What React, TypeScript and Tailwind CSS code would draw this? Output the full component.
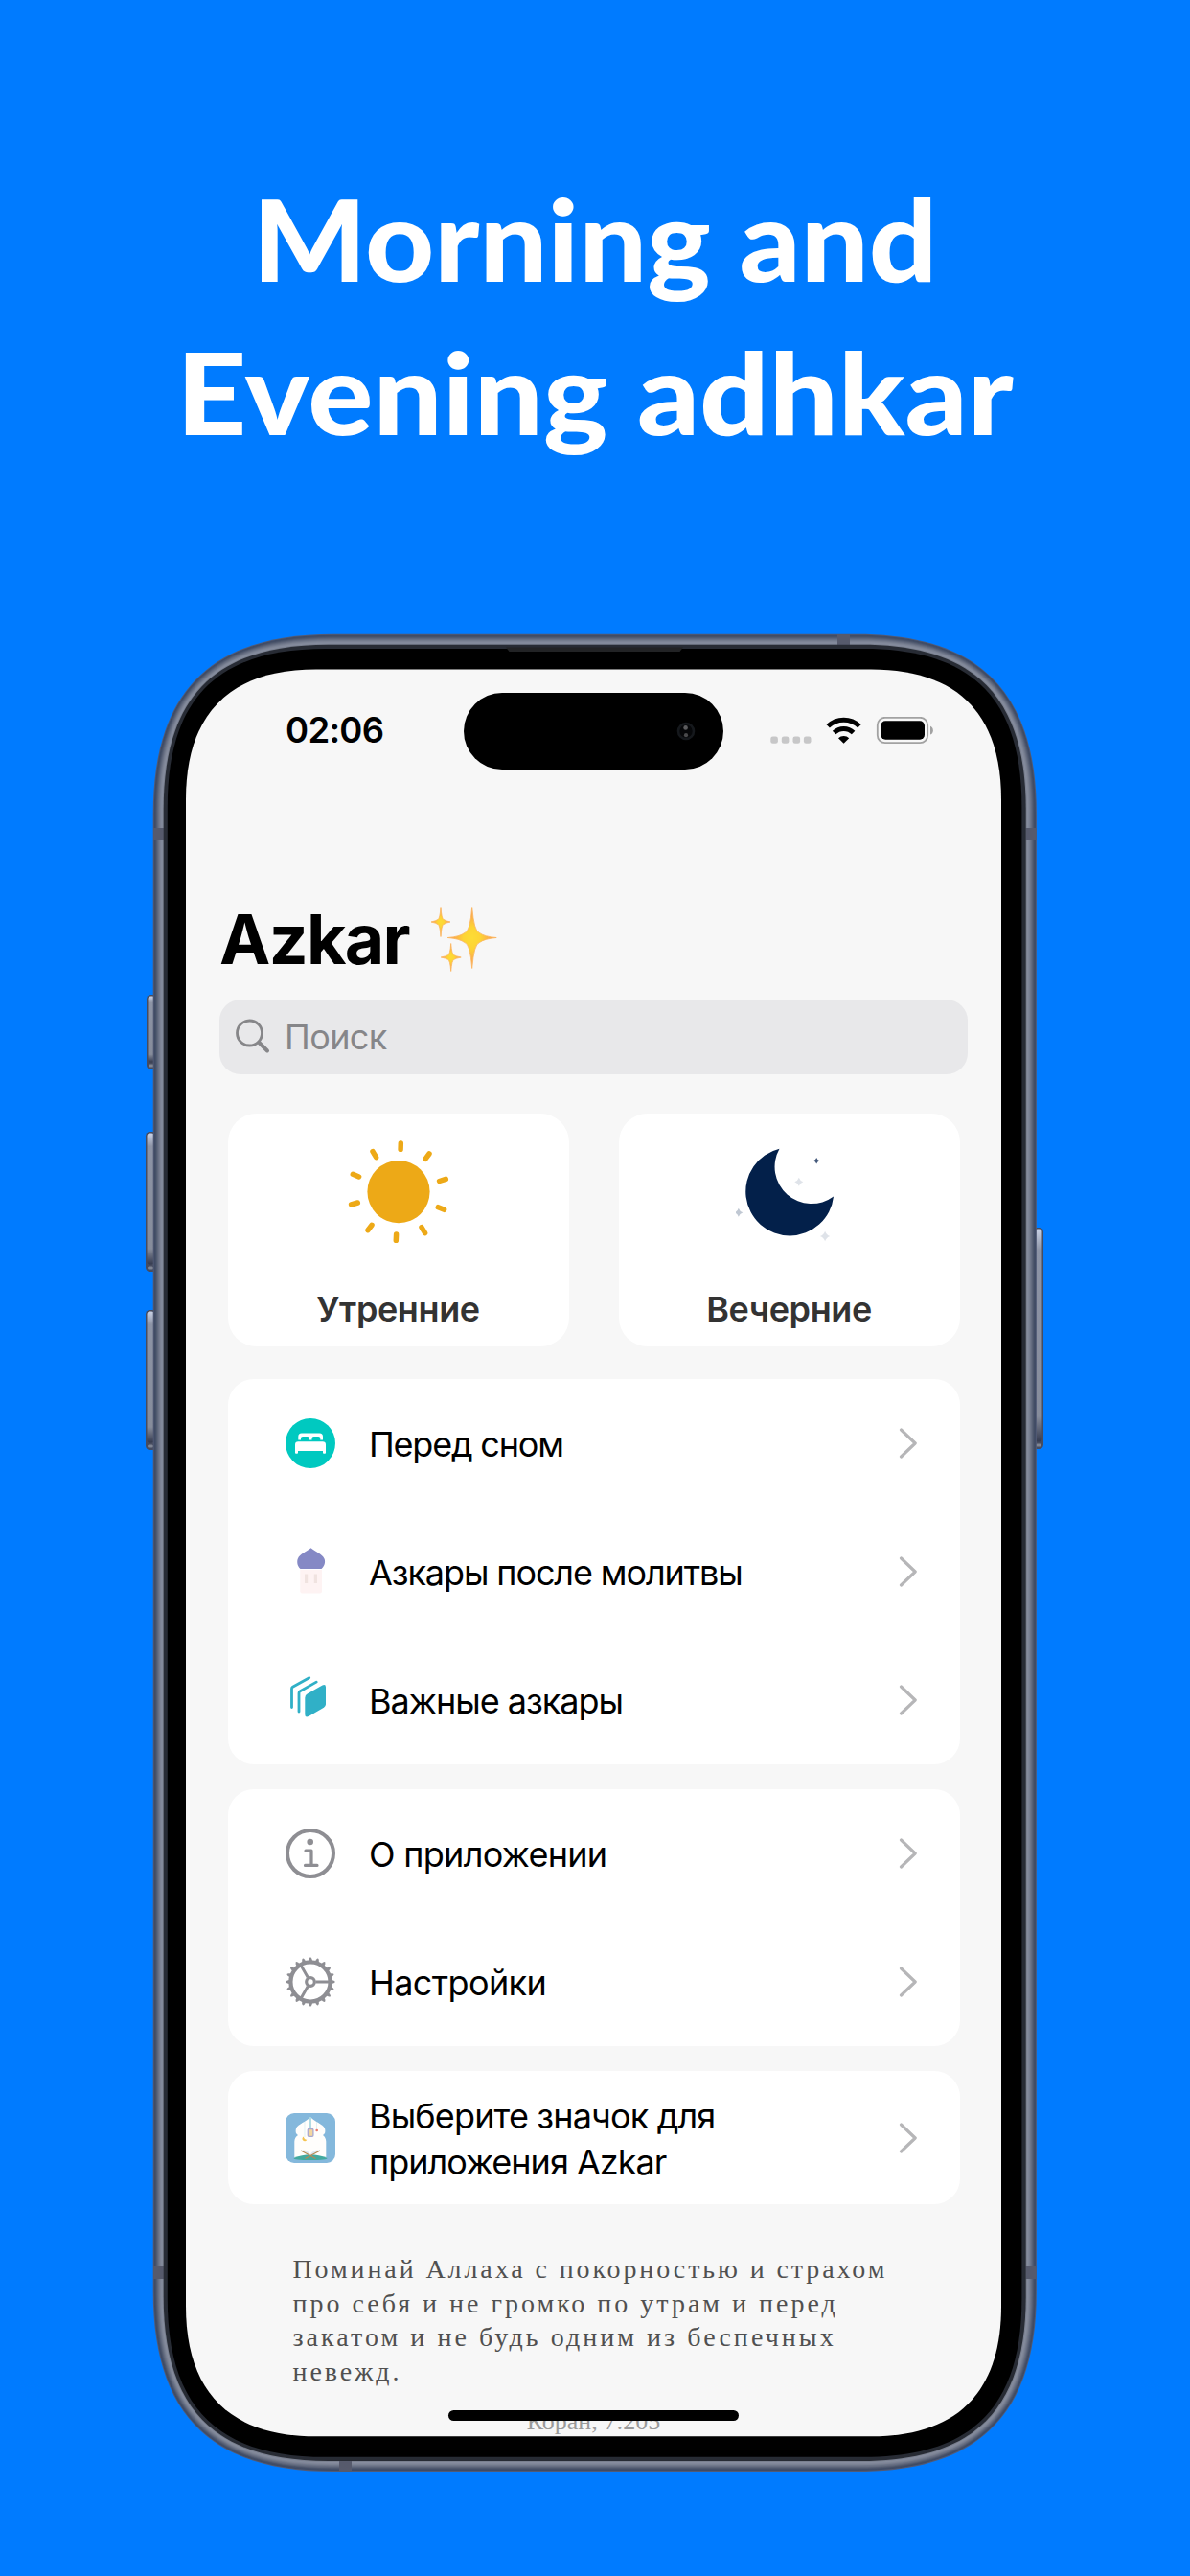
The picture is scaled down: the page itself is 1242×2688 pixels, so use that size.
import type { ReactNode } from "react";

/* Smooth-cornered rectangle: l is where the curve starts, a is the handle distance from the corner. */
function squircle(x0: number, y0: number, x1: number, y1: number, l: number, a: number) {
  return `M${x0} ${y0 + l}C${x0} ${y0 + a} ${x0 + a} ${y0} ${x0 + l} ${y0}H${x1 - l}C${x1 - a} ${y0} ${x1} ${y0 + a} ${x1} ${y0 + l}V${y1 - l}C${x1} ${y1 - a} ${x1 - a} ${y1} ${x1 - l} ${y1}H${x0 + l}C${x0 + a} ${y1} ${x0} ${y1 - a} ${x0} ${y1 - l}Z`;
}

const bandColors = ["#515a75", "#3f4b64", "#444f67", "#4e586e", "#5a6378", "#666e82", "#70788b", "#7b8293", "#81889a", "#868d9e", "#7a8090"];

function SideButton({ x, y, h, flip }: { x: number; y: number; h: number; flip?: boolean }) {
  return (
    <g>
      <rect x={x} y={y} width={14} height={h} rx={4.5} fill="#474c5f" />
      <rect x={flip ? x + 5 : x + 1.5} y={y + 1.5} width={7.5} height={h - 9} rx={3} fill="url(#button)" />
      <rect x={flip ? x + 6 : x + 2} y={y + h - 5.5} width={6} height={3} rx={1.5} fill="#7f8593" />
    </g>
  );
}

function PhoneFrame() {
  return (
    <svg className="absolute inset-0" width="942" height="1927" viewBox="150 657 942 1927">
      <defs>
        <linearGradient id="button" x1="0" y1="0" x2="0" y2="1">
          <stop offset="0" stopColor="#c9d2e6" />
          <stop offset="0.1" stopColor="#8d94a6" />
          <stop offset="0.88" stopColor="#868c9b" />
          <stop offset="1" stopColor="#343a4f" />
        </linearGradient>
      </defs>
      <SideButton x={153} y={1038} h={78} />
      <SideButton x={152} y={1181} h={146} />
      <SideButton x={152} y={1367} h={146} />
      <SideButton x={1075} y={1281} h={231} flip />
      {bandColors.map((c, i) => (
        <path key={c} d={squircle(159.7 + i, 661.7 + i, 1081.9 - i, 2579 - i, 188 - i * 1.5, 60 - i * 0.55)} fill={c} />
      ))}
      <g fill="#565a6c">
        <rect x="160" y="864" width="11" height="13" />
        <rect x="160" y="2365" width="11" height="13" />
        <rect x="1070.5" y="864" width="11" height="13" />
        <rect x="1070.5" y="2365" width="11" height="13" />
        <rect x="874" y="662" width="13" height="11" />
        <rect x="354" y="2568" width="13" height="11" />
      </g>
      <path d={squircle(170.7, 672.7, 1070.7, 2568, 172, 54)} fill="#272b34" />
      <path d={squircle(174.8, 677, 1066.4, 2563.8, 165, 52)} fill="#000" />
      <path d="M528 675.5H713L709.5 680H531.5Z" fill="#222325" />
      <path d={squircle(194, 698.6, 1045, 2542.3, 136, 46)} fill="#f7f7f7" />
    </svg>
  );
}

function StatusBar() {
  return (
    <div className="flex h-[104px] shrink-0 items-end">
      <div className="flex h-[80px] w-full items-center">
        <div className="w-[290px] pl-[104px] text-[36.5px] leading-none font-semibold tracking-[-0.7px] text-black">02:06</div>
        <div className="flex h-[80px] w-[271px] items-center justify-end rounded-full bg-black pr-[29px]">
          <svg width="20" height="20" viewBox="0 0 20 20">
            <circle cx="10" cy="10" r="8" fill="#060709" stroke="#15181c" strokeWidth="2.6" />
            <circle cx="9.6" cy="6.4" r="2.3" fill="#5c5c5e" />
            <circle cx="10" cy="14.2" r="2.1" fill="#4a4a4c" />
          </svg>
        </div>
        <svg className="ml-[49px]" width="172" height="30" viewBox="804 747.500 172 30">
          {[804.3, 815.8, 827.5, 838.9].map((x) => (
            <rect key={x} x={x} y="768" width="7.6" height="7.2" rx="2.3" fill="#c7c7c8" />
          ))}
          <g fill="none" stroke="#000" strokeWidth="5">
            <path d="M864.2 757.3a23.6 23.6 0 0 1 32.8 0" />
            <path d="M870.6 764a14.3 14.3 0 0 1 20 0" />
          </g>
          <path d="M880.6 775.2l-5.6-5.4a8 8 0 0 1 11.2 0z" />
          <rect x="915.8" y="748.3" width="52.4" height="26.4" rx="8" fill="none" stroke="#a2a2a2" strokeWidth="1.8" />
          <rect x="919.2" y="751.8" width="45.8" height="19.4" rx="5" />
          <path d="M971 757.2c3.8 1.3 3.8 7.6 0 8.8z" fill="#a2a2a2" />
        </svg>
      </div>
    </div>
  );
}

function Star({ cx, cy, w, h }: { cx: number; cy: number; w: number; h: number }) {
  const k = 0.2;
  return (
    <path
      d={`M${cx} ${cy - h}Q${cx + w * 0.08} ${cy - h * k} ${cx + w * 0.3} ${cy - h * 0.16}Q${cx + w * 0.5} ${cy - 1} ${cx + w} ${cy}Q${cx + w * 0.5} ${cy + 1} ${cx + w * 0.3} ${cy + h * 0.16}Q${cx + w * 0.08} ${cy + h * k} ${cx} ${cy + h}Q${cx - w * 0.08} ${cy + h * k} ${cx - w * 0.3} ${cy + h * 0.16}Q${cx - w * 0.5} ${cy + 1} ${cx - w} ${cy}Q${cx - w * 0.5} ${cy - 1} ${cx - w * 0.3} ${cy - h * 0.16}Q${cx - w * 0.08} ${cy - h * k} ${cx} ${cy - h}Z`}
      fill="url(#gold)"
      stroke="#fbb45a"
      strokeWidth="0.8"
      strokeLinejoin="round"
    />
  );
}

function Sparkles() {
  return (
    <svg width="70" height="70" viewBox="449 946 70 70">
      <defs>
        <radialGradient id="gold">
          <stop offset="0" stopColor="#fddc35" />
          <stop offset="0.35" stopColor="#fdd435" />
          <stop offset="0.7" stopColor="#fbaf4a" />
          <stop offset="1" stopColor="#f79a5c" />
        </radialGradient>
      </defs>
      <Star cx={492.7} cy={979.5} w={25.5} h={32} />
      <Star cx={460} cy={963} w={10} h={15.5} />
      <Star cx={470.7} cy={1000} w={10.5} h={14.5} />
    </svg>
  );
}

function SunIcon() {
  const rays = [
    [118, 23, 117.8, 29.3],
    [147.7, 34, 143.7, 39.3],
    [165, 60.3, 158.3, 62.5],
    [157, 89.7, 163.3, 92.3],
    [139.7, 110.7, 143.3, 116.7],
    [113.3, 118, 113, 124.3],
    [87.7, 108.3, 83.7, 113.7],
    [73, 85, 66.3, 87],
    [68, 55.3, 74.3, 58],
    [88.7, 31.7, 92.3, 37.7],
  ];
  return (
    <svg width="112" height="112" viewBox="59.7 18 112 112">
      <circle cx="115.7" cy="73.6" r="32.6" fill="#eda917" />
      <g stroke="#eda917" strokeWidth="5.5" strokeLinecap="round">
        {rays.map(([x1, y1, x2, y2]) => (
          <line key={x1} x1={x1} y1={y1} x2={x2} y2={y2} />
        ))}
      </g>
    </svg>
  );
}

function MoonIcon() {
  const stars: [number, number, number, string][] = [
    [221.7, 61.2, 3.2, "#44597b"],
    [203.3, 83.2, 4.5, "#dfe3e9"],
    [140.3, 115.2, 4.5, "#c0c8d3"],
    [230.6, 140, 5.2, "#dfe3e9"],
  ];
  return (
    <svg width="112" height="112" viewBox="137.5 38 112 112">
      <path d="M183 48.700A46 46 0 1 0 239.500 98.500A38.500 38.500 0 0 1 183 48.700Z" fill="#03204a" />
      {stars.map(([x, y, r, c]) => (
        <path key={x} d={`M${x} ${y - r}Q${x + r * 0.25} ${y - r * 0.25} ${x + r} ${y}Q${x + r * 0.25} ${y + r * 0.25} ${x} ${y + r}Q${x - r * 0.25} ${y + r * 0.25} ${x - r} ${y}Q${x - r * 0.25} ${y - r * 0.25} ${x} ${y - r}Z`} fill={c} />
      ))}
    </svg>
  );
}

function BedIcon() {
  return (
    <svg width="52" height="52" viewBox="0 0 52 52">
      <circle cx="26" cy="26" r="26" fill="#00c9c0" />
      <path d="M13.300 22.500V19a3.500 3.500 0 0 1 3.500-3.500H35.500a3.500 3.500 0 0 1 3.500 3.500V22.500H36.300V21a2 2 0 0 0-2-2H29.500a2 2 0 0 0-2 2V22.500H25V21a2 2 0 0 0-2-2H18a2 2 0 0 0-2 2V22.500ZM10 36V27.500a3.200 3.200 0 0 1 3.200-3.200H38.800a3.200 3.200 0 0 1 3.200 3.200V36q0 .8-1 .8h-1q-1 0-1-.8V34H13v2q0 .8-1 .8h-1q-1 0-1-.8Z" fill="#fff" />
    </svg>
  );
}

function MosqueIcon() {
  return (
    <svg width="52" height="52" viewBox="0 0 52 52">
      <path d="M15.300 24H38V46.500a2 2 0 0 1-2 2H17.300a2 2 0 0 1-2-2Z" fill="#fef3f3" />
      <path d="M15.500 23C12.500 20.500 11.500 16 12.800 12.500C15 7 22.500 5 26.500 1.300C30.500 5 38 7 40.500 12.500C42 16 40.500 20.500 37.500 23Z" fill="#8589c5" />
      <path d="M20 28.500h3.200v9.500H20zM29.800 28.500h3.200v9.500h-3.200z" fill="#f0e3e0" />
    </svg>
  );
}

function BooksIcon() {
  return (
    <svg width="52" height="52" viewBox="0 0 52 52">
      <g fill="none" stroke="#30b0c7" strokeWidth="2.800" strokeLinecap="round" strokeLinejoin="round">
        <path d="M24.700 2.700L7.500 12.300q-1 .6-1 1.800V33.500" />
        <path d="M32.200 7.100L15.200 16.800q-1.200.7-1.200 2V38" />
      </g>
      <path d="M23 19.200L38.500 10.500q3.500-1.500 3.500 2V30q0 2.500-2 3.700L24.500 42.800Q20.300 45 20.300 41V23.500Q20.300 20.700 23 19.200Z" fill="#30b0c7" />
    </svg>
  );
}

function InfoIcon() {
  return (
    <svg width="52" height="52" viewBox="0 0 52 52" fill="none" stroke="#8e8e93">
      <circle cx="26" cy="26" r="24" strokeWidth="4" />
      <circle cx="25.700" cy="14" r="3.300" fill="#8e8e93" stroke="none" />
      <path d="M21 23.200H27V38.400M20.500 38.400H33" strokeWidth="3.200" strokeLinecap="round" strokeLinejoin="round" />
    </svg>
  );
}

function GearIcon() {
  const teeth = Array.from({ length: 20 }, (_, i) => i * 18);
  return (
    <svg width="52" height="52" viewBox="0 0 52 52" fill="none" stroke="#8e8e93">
      {teeth.map((t) => (
        <path key={t} d="M45.500 23.400L50 24.500Q53.500 26 50 27.500L45.500 28.600Z" fill="#8e8e93" stroke="none" transform={`rotate(${t} 26 26)`} />
      ))}
      <circle cx="26" cy="26" r="20.600" strokeWidth="4.200" />
      <circle cx="26" cy="26" r="4.300" strokeWidth="3.200" />
      <path d="M31.500 26H45M23.200 21.200L16.200 9M23.200 30.800L16.200 43" strokeWidth="3" />
    </svg>
  );
}

function AzkarAppIcon() {
  return (
    <svg width="52" height="52" viewBox="0 0 52 52">
      <rect width="52" height="52" rx="9" fill="#84b8dc" />
      <path d="M9.300 46.500V29.500Q9.500 25 13 23Q9.500 21 11 16C13 11 22 9.500 26 3.800C30 9.500 39 11 41 16Q42.500 21 39 23Q42 25 42.300 29.500V46.500Z" fill="#fffefc" />
      <path d="M8.500 47Q26 39.500 43.500 47Q43.500 49 26 49Q8.500 49 8.500 47Z" fill="#43aa9f" />
      <path d="M26 4V17" stroke="#9fd3dd" strokeWidth="1.600" />
      <path d="M20 9V25M32.500 9V17" stroke="#d6ecf1" strokeWidth=".7" />
      <rect x="23.300" y="16.500" width="5.600" height="7.800" rx="1" fill="#f4d79e" stroke="#a9a8d0" strokeWidth="1.300" />
      <circle cx="32.700" cy="18" r="1.300" fill="#ec7968" />
      <path d="M19 24.500a2.500 2.500 0 1 0 3.300 3.200a3 3 0 0 1-3.300-3.200z" fill="#f5c451" />
      <path d="M17 38.500Q23 38 25.800 43Q29 38 35.500 38.500L26 45Z" fill="#dfe8f2" />
      <path d="M16 39L31.500 47.500M36 39L20.500 47.500" stroke="#b58a54" strokeWidth="1.200" />
    </svg>
  );
}

function Chevron() {
  return (
    <svg width="20" height="32" viewBox="0 0 20 32">
      <path d="M2.500 2L17.200 16L2.500 30" fill="none" stroke="#b6b6b8" strokeWidth="3.200" strokeLinecap="round" strokeLinejoin="round" />
    </svg>
  );
}

function MenuRow({ icon, children }: { icon: ReactNode; children: ReactNode }) {
  return (
    <div className="flex h-[134px] items-center pr-[44px] pl-[60.5px]">
      {icon}
      <div className="ml-[35px] flex-1 pt-[2px] text-[36px] leading-[48px]">{children}</div>
      <Chevron />
    </div>
  );
}

function CategoryCard({ icon, children }: { icon: ReactNode; children: ReactNode }) {
  return (
    <div className="flex h-[243px] w-[356px] flex-col items-center rounded-[30px] bg-white pt-[26px] text-[36px] leading-[48px] font-semibold tracking-[-0.4px] text-[#333333]">
      {icon}
      <div className="mt-[42px]">{children}</div>
    </div>
  );
}

export default function App() {
  return (
    <main className="h-[2688px] w-[1242px] overflow-hidden bg-[#007bff] font-['Inter','Liberation_Sans',sans-serif] text-black">
      <header className="h-[657px] pt-[169px] text-center font-['Lato','Noto_Sans',sans-serif] text-[118px] leading-[160px] font-black text-white">
        <h1>
          <span className="block scale-x-[1.062]">Morning and</span>
          <span className="block scale-x-[1.079]">Evening adhkar</span>
        </h1>
      </header>

      <section className="relative mx-auto h-[1927px] w-[942px]">
        <PhoneFrame />
        <div className="relative mr-[47px] ml-[44px] flex h-[1885.500px] flex-col overflow-hidden pt-[41.500px]">
          <StatusBar />

          <div className="mt-[127.500px] flex h-[100px] shrink-0 items-center pl-[35px]">
            <h2 className="w-[220px] text-[71.500px] leading-[100px] font-bold tracking-[-1.700px]">Azkar</h2>
            <Sparkles />
          </div>

          <div className="mx-[35px] mt-[12.500px] flex h-[78px] shrink-0 items-center rounded-[22px] bg-[#e8e8ea] pl-[17px] text-[36px] tracking-[-0.600px] text-[#868689]">
            <svg width="36" height="37" viewBox="0 0 36 37" fill="none" stroke="#868689" strokeLinecap="round">
              <circle cx="14.500" cy="15" r="13" strokeWidth="2.800" />
              <path d="M24.500 25L33 33.500" strokeWidth="4" />
            </svg>
            <span className="ml-[15px]">Поиск</span>
          </div>

          <div className="mx-[43.500px] mt-[41.500px] flex shrink-0 justify-between">
            <CategoryCard icon={<SunIcon />}>Утренние</CategoryCard>
            <CategoryCard icon={<MoonIcon />}>Вечерние</CategoryCard>
          </div>

          <div className="mx-[43.500px] mt-[34px] shrink-0 rounded-[27px] bg-white">
            <MenuRow icon={<BedIcon />}>
              <span className="tracking-[-1.200px]">Перед сном</span>
            </MenuRow>
            <MenuRow icon={<MosqueIcon />}>
              <span className="tracking-[-1.100px]">Азкары после молитвы</span>
            </MenuRow>
            <MenuRow icon={<BooksIcon />}>
              <span className="tracking-[-1px]">Важные азкары</span>
            </MenuRow>
          </div>

          <div className="mx-[43.500px] mt-[26px] shrink-0 rounded-[27px] bg-white">
            <MenuRow icon={<InfoIcon />}>
              <span className="tracking-[-0.700px]">О приложении</span>
            </MenuRow>
            <MenuRow icon={<GearIcon />}>
              <span className="tracking-[-0.600px]">Настройки</span>
            </MenuRow>
          </div>

          <div className="mx-[43.500px] mt-[26px] shrink-0 rounded-[27px] bg-white py-[2.500px]">
            <MenuRow icon={<AzkarAppIcon />}>
              <span className="block tracking-[-0.850px]">Выберите значок для</span>
              <span className="block tracking-[-1px]">приложения Azkar</span>
            </MenuRow>
          </div>

          <div className="mt-[50px] ml-[111.500px] shrink-0 font-['Liberation_Serif',serif] text-[28px] leading-[35.500px] tracking-[2.900px] whitespace-nowrap text-[#505050]">
            Поминай Аллаха с покорностью и страхом
            <br />
            <span className="tracking-[3px]">про себя и не громко по утрам и перед</span>
            <br />
            <span className="tracking-[3.050px]">закатом и не будь одним из беспечных</span>
            <br />
            невежд.
          </div>
          <div className="mt-[17px] shrink-0 text-center font-['Liberation_Serif',serif] text-[26px] leading-[36px] text-[#9a9a9a]">Коран, 7:205</div>
          <div className="absolute bottom-[17px] left-[274px] h-[11px] w-[303px] rounded-full bg-black" />
        </div>
      </section>
    </main>
  );
}
